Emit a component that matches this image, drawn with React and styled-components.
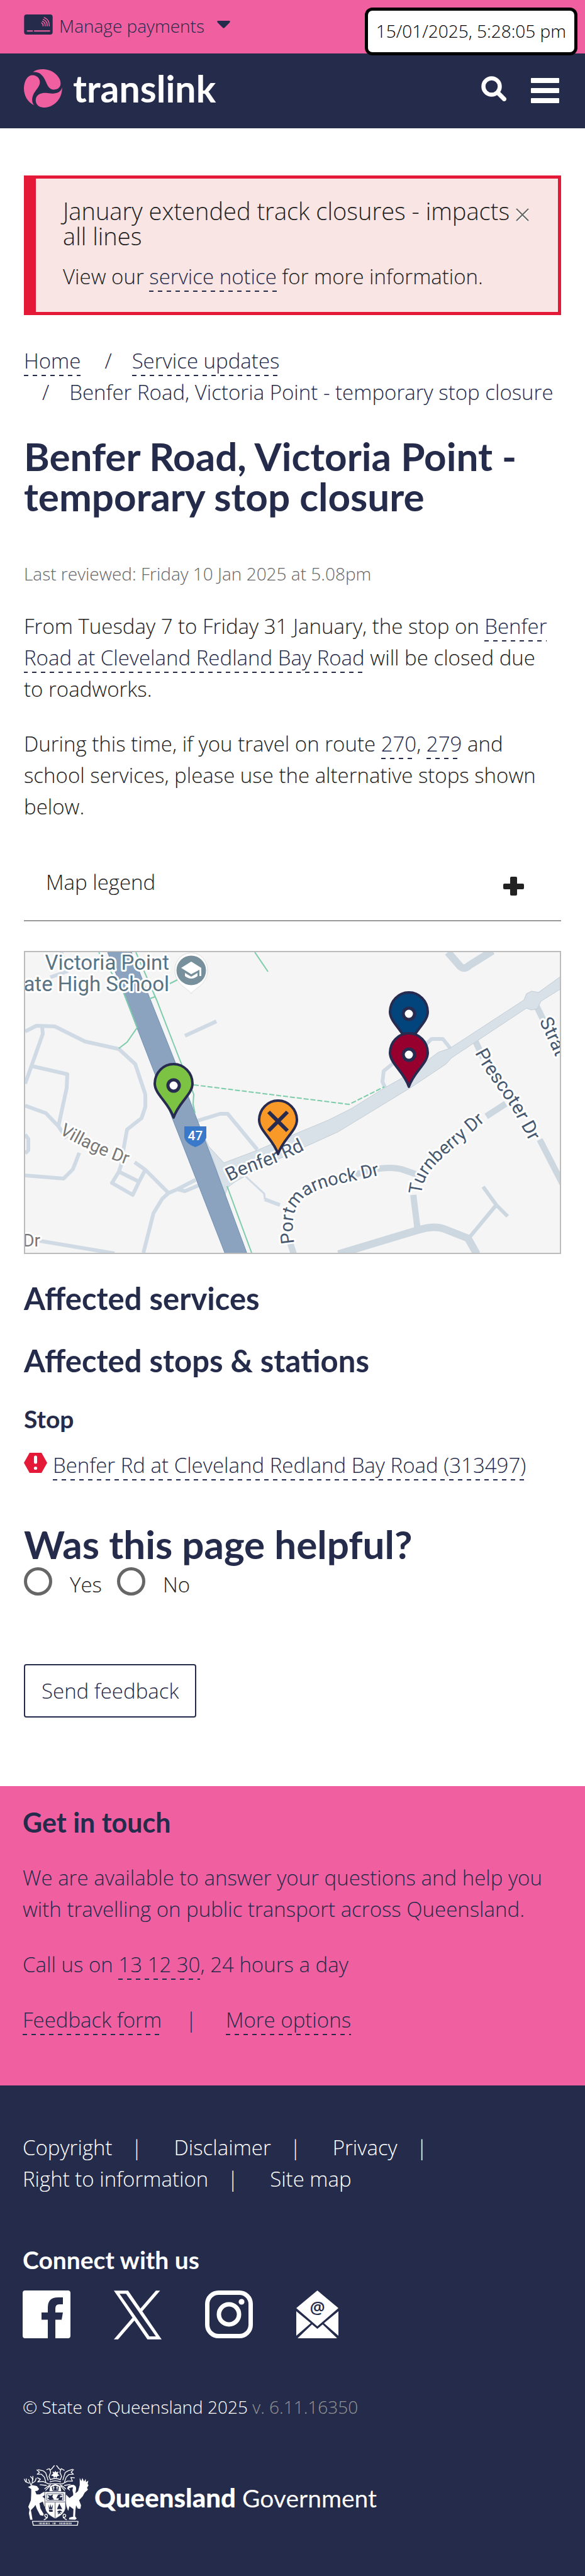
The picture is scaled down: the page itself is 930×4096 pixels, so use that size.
import React from "react";
import styled, { createGlobalStyle } from "styled-components";

const navy = "#252b4b";
const pink = "#f060a1";
const red = "#e41937";
const ink = "#222222";
const bodyFont = `"Open Sans", "Noto Sans", sans-serif`;
const headFont = `Lato, "Open Sans", sans-serif`;

const GlobalStyle = createGlobalStyle`
  *, *::before, *::after { box-sizing: border-box; }
  body {
    margin: 0;
    background: #ffffff;
    color: ${ink};
    font-family: ${bodyFont};
    font-size: 33px;
    font-weight: 300;
    line-height: 50px;
  }
  h1, h2, h3, p, ul, ol { margin: 0; padding: 0; }
  ul, ol { list-style: none; }
  button { font: inherit; color: inherit; background: none; border: 0; padding: 0; margin: 0; cursor: pointer; }
  svg { display: block; flex: none; }
`;

/* ---------- shared parts ---------- */

const Page = styled.div`
  position: relative;
  display: flex;
  flex-direction: column;
`;

const DashedLink = styled.a`
  color: ${navy};
  text-decoration: none;
  padding-bottom: 2px;
  background: repeating-linear-gradient(to right, ${navy} 0 7px, transparent 7px 14px) left bottom / 100% 2px no-repeat;
`;

const Heading = styled.h2`
  color: ${(p) => p.$color || navy};
  font-family: ${headFont};
  font-weight: 700;
  font-size: ${(p) => p.$size}px;
  line-height: ${(p) => p.$line}px;
  margin-top: ${(p) => p.$top || 0}px;
`;

const Paragraph = styled.p`
  margin-top: ${(p) => p.$top}px;
  padding-right: 8px;
`;

/* ---------- header ---------- */

const TopBar = styled.div`
  display: flex;
  height: 85px;
  padding: 23px 38px 0;
  background: ${pink};
`;

const PaymentsButton = styled.button`
  display: flex;
  align-items: flex-start;
  gap: 10px;
  height: 36px;
  color: ${navy};
  font-size: 28px;
  line-height: 36px;
`;

const Caret = styled.svg`
  margin: 10px 0 0 10px;
`;

const Clock = styled.div`
  position: absolute;
  top: 12px;
  right: 12px;
  padding: 13px 13px 15px;
  border: 5px solid #000000;
  border-radius: 12px;
  background: #ffffff;
  color: #000000;
  font-size: 28px;
  line-height: 38px;
`;

const Header = styled.header`
  display: flex;
  align-items: center;
  height: 119px;
  padding: 0 41px 8px 38px;
  background: ${navy};
  color: #ffffff;
`;

const Brand = styled.a`
  display: flex;
  align-items: center;
  gap: 17px;
  margin-right: auto;
  color: #ffffff;
  text-decoration: none;
  font-family: ${headFont};
  font-size: 59px;
  font-weight: 700;
  line-height: 60px;
`;

const IconButton = styled.button`
  margin-left: 39px;
`;

/* ---------- main ---------- */

const Main = styled.main`
  padding: 75px 38px 109px;
`;

const Alert = styled.section`
  display: flex;
  align-items: flex-start;
  padding: 31px 46px 31px 43px;
  border: 5px solid ${red};
  border-left-width: 19px;
  background: #f8e5e4;
`;

const AlertBody = styled.div`
  flex: 1;
`;

const AlertTitle = styled.h2`
  font-size: 38px;
  font-weight: 300;
  line-height: 40px;
`;

const CloseButton = styled.button`
  margin-top: 16px;
`;

const Breadcrumb = styled.ol`
  display: flex;
  flex-wrap: wrap;
  column-gap: 9px;
  margin-top: 48px;
  color: ${navy};
`;

const Crumb = styled.li`
  & + &::before {
    content: "/";
    padding: 0 32px 0 29px;
  }
`;

const Reviewed = styled.p`
  margin-top: 70px;
  color: #666666;
  font-size: 28px;
  line-height: 42px;
`;

const LegendToggle = styled.button`
  display: flex;
  justify-content: space-between;
  width: 100%;
  margin-top: 35px;
  padding: 35px 59px 35px 35px;
  border-bottom: 2px solid #999999;
`;

const PlusIcon = styled.svg`
  margin-top: 16px;
`;

const MapFrame = styled.figure`
  margin: 47px 0 0;
  border: 2px solid #bcbcbc;
  background: #f5f5f5;
  svg { width: 100%; height: auto; }
`;

const StopRow = styled.div`
  display: flex;
  align-items: flex-start;
  gap: 9px;
  margin-top: 24px;
`;

const StopIcon = styled.svg`
  margin-top: 5px;
`;

const Choices = styled.div`
  display: flex;
  gap: 24px;
  margin-top: 5px;
`;

const Choice = styled.label`
  display: flex;
  align-items: flex-start;
  gap: 28px;
  span { padding-top: 3px; }
`;

const Radio = styled.input`
  appearance: none;
  width: 45px;
  height: 45px;
  margin: 0;
  border: 5px solid #666666;
  border-radius: 50%;
  background: #ffffff;
`;

const SendButton = styled.button`
  display: block;
  margin-top: 101px;
  padding: 16px 26px 15px;
  border: 2px solid ${navy};
  border-radius: 4px;
  color: ${navy};
`;

/* ---------- contact and footer ---------- */

const Contact = styled.section`
  padding: 33px 36px 79px;
  background: ${pink};
  color: ${navy};
`;

const LinkList = styled.ul`
  display: flex;
  flex-wrap: wrap;
  column-gap: ${(p) => p.$gap}px;
  margin-top: ${(p) => p.$top || 0}px;
`;

const LinkItem = styled.li`
  &:not(:last-child)::after {
    content: "|";
    padding-left: ${(p) => p.$gap}px;
  }
`;

const Footer = styled.footer`
  padding: 74px 36px 80px;
  background: ${navy};
  color: #ffffff;
`;

const FooterLink = styled.a`
  color: #ffffff;
  text-decoration: none;
`;

const Social = styled.ul`
  display: flex;
  gap: 69px;
  margin-top: 24px;
  height: 76px;
`;

const Copyright = styled.p`
  margin-top: 88px;
  font-size: 28px;
  line-height: 42px;
`;

const Version = styled.span`
  color: #949494;
`;

const GovLogo = styled.a`
  display: flex;
  align-items: center;
  gap: 9px;
  margin: 72px 0 0 2px;
  color: #ffffff;
  text-decoration: none;
  font-family: ${headFont};
  font-size: 39px;
  font-weight: 400;
  strong { font-size: 42px; font-weight: 900; }
  span { padding-top: 6px; }
`;

/* ---------- drawings ---------- */

const CardIcon = () => (
  <svg width="46" height="32" viewBox="60 57 173 122" aria-hidden="true">
    <rect x="60" y="57" width="173" height="122" rx="15" fill={navy} />
    <g fill="none" stroke={pink} strokeWidth="6" strokeLinecap="round">
      <path d="M80 157H110M123 157H214" strokeWidth="8" />
      <path d="M166 108Q177 114 175 126M171 98Q190 106 188 126M176 87Q202 98 200 126M182 76Q215 88 212 126" />
    </g>
  </svg>
);

const TranslinkMark = () => (
  <svg width="61" height="61" viewBox="54 380 232 232" aria-hidden="true" fill={pink}>
    <path d="M108 398C124 385 145 380 172 380C218 382 252 406 270 440C282 468 276 492 252 501C226 509 207 498 196 476C184 448 176 428 158 412C144 400 128 396 108 398Z" />
    <path d="M104 416C138 416 154 442 150 466C145 498 102 522 104 570C105 582 109 590 117 599C78 580 54 542 54 495C56 448 76 418 104 416Z" />
    <path d="M285 491C286 560 236 612 172 612C140 611 122 588 126 560C132 532 158 523 188 524C222 529 272 534 285 491Z" />
  </svg>
);

const Pin = ({ x, y, color, crossed }) => (
  <g transform={`translate(${x} ${y})`}>
    <path d="M0 42C-7 19 -30 5 -30 -12A30 31 0 0 1 30 -12C30 5 7 19 0 42Z" fill={color} stroke="#272b50" strokeWidth="4" strokeLinejoin="round" />
    {crossed ? (
      <path d="M-15 -25L15 5M15 -25L-15 5" stroke="#272b50" strokeWidth="6" />
    ) : (
      <circle cy="-9" r="9" fill="#ffffff" stroke="#272b50" strokeWidth="5" />
    )}
  </g>
);

const StreetMap = () => (
  <svg viewBox="2 2 850 478" role="img" aria-label="Map of Benfer Road stops">
    <defs>
      <path id="village" d="M56 290Q105 321 185 347" />
      <path id="benfer" d="M327 367C350 353 385 345 412 332Q435 323 460 309" />
      <path id="portmarnock" d="M430 465C423 425 430 402 452 388C485 368 530 368 580 352" />
      <path id="turnberry" d="M632 388C634 360 648 345 674 321Q707 293 750 256" />
      <path id="prescoter" d="M717 162C735 200 770 235 785 268Q803 300 820 335" />
      <path id="strat" d="M819 112Q838 148 862 210" />
    </defs>
    <rect x="0" y="0" width="854" height="482" fill="#f5f5f5" />
    <g fill="none" stroke="#cfdae5" strokeWidth="6" strokeLinejoin="round">
      <path d="M2 128L20 119L49 120L97 144L151 156L177 180L193 228V248L187 266L164 284L158 317L155 339L151 351L140 369L173 388L183 367L193 348" />
      <path d="M151 351L183 367M29 121L30 132L12 183L2 211M12 183L69 196L68 218L55 278" />
      <path d="M2 246L35 258L55 279L68 298M176 336L193 348L230 385" />
      <path d="M2 292L7 299V317L2 322M88 321L78 347L63 362L2 357" />
      <path d="M273 364L244 379L230 385L220 394L206 417L190 480M282 371L256 382L244 379" />
      <path d="M25 461L144 481M256 135L306 112M42 42L70 32M60 2V10" />
      <path d="M273 271L312 259H324L371 316M588 178L572 191L570 208L574 217M640 148L648 140L666 140L678 155" />
      <path d="M353 359L382 386L383 395" strokeWidth="3" />
      <path d="M383 395L407 404" />
      <path d="M730 375L751 404L769 422M751 404L707 457" stroke="#ccd7e0" />
    </g>
    <g fill="none" stroke="#ccd7e0" strokeWidth="10" strokeLinejoin="round">
      <path d="M674 2L693 24Q700 31 708 23L745 0" strokeWidth="12" />
      <path d="M814 86L826 110M718 144L730 170M820 300L856 370M766 243L735 263M619 388L626 444" />
      <path d="M520 358Q570 340 600 347L629 357M422 460L429 482" />
      <path d="M500 482L626 444Q652 436 668 442L706 457L720 482" strokeWidth="12" />
    </g>
    <path
      d="M273 268L294 311L318 337L371 317L436 289L484 269L520 251L573 218L614 195L659 161L677 155L795 78L799 68L807 64L818 66L854 40V60L822 80L816 92L807 94L799 91L680 170L671 180L614 218L499 288L448 311L377 344L336 367L324 376L320 387L312 367L303 337Z"
      fill="#d8e0e8"
      stroke="#c3ced6"
      strokeWidth="1"
    />
    <path d="M133 2H171L187 42L241 178L303 341L355 482H320L273 361L208 195Z" fill="#8ba3bf" stroke="#6f90b6" strokeWidth="1" />
    <g fill="none" stroke="#7dccac" strokeWidth="2">
      <path d="M367 2L388 33M178 2L211 78L247 171L270 228L269 244L272 258M119 2L158 65L180 122L164 145L151 155M323 374L362 480M232 52L246 45M200 76L208 73" />
      <path d="M270 213L517 244L573 216" strokeDasharray="8 3" />
    </g>
    <g fontFamily="Roboto, sans-serif" fontWeight="400" fontSize="29" stroke="#ffffff" strokeWidth="6" strokeLinejoin="round" paintOrder="stroke">
      <g fill="#587383" fontSize="33" textAnchor="end">
        <text x="231" y="30">Victoria Point</text>
        <text x="231" y="64">ate High School</text>
      </g>
      <g fill="#777777" fontSize="28">
        <text><textPath href="#village">Village Dr</textPath></text>
        <text x="26" y="470" textAnchor="end">Dr</text>
      </g>
      <g fill="#465870">
        <text fontSize="30"><textPath href="#benfer">Benfer Rd</textPath></text>
        <text><textPath href="#portmarnock">Portmarnock Dr</textPath></text>
        <text><textPath href="#turnberry">Turnberry Dr</textPath></text>
        <text fontSize="30"><textPath href="#prescoter">Prescoter Dr</textPath></text>
        <text fontSize="30"><textPath href="#strat">Strat</textPath></text>
      </g>
    </g>
    <path d="M266 68C262 60 240 54 240 30A26 27 0 0 1 292 30C292 54 270 60 266 68Z" fill="#ffffff" stroke="#dddddd" />
    <circle cx="266" cy="31" r="23.5" fill="#78909c" />
    <path d="M250 27L266 17L282 27V40H279V30L266 37ZM256 35L266 41L276 35V40Q266 48 256 40Z" fill="#ffffff" />
    <path d="M255 279H290V297Q287 307 272.500 312Q258 307 255 297Z" fill="#3a78c9" />
    <text x="272.500" y="301" textAnchor="middle" fill="#ffffff" fontFamily="Roboto, sans-serif" fontSize="21" fontWeight="500">47</text>
    <Pin x={612} y={109} color="#01457c" />
    <Pin x={612} y={174} color="#97002e" />
    <Pin x={238} y={223} color="#7cc243" />
    <Pin x={404} y={281} color="#f99928" crossed />
  </svg>
);

const Crest = () => (
  <svg width="103" height="96" viewBox="54 50 392 366" aria-hidden="true" fill="#ffffff">
    <g fill="none" stroke="#ffffff" strokeWidth="5" strokeLinecap="round" strokeLinejoin="round">
      <path d="M56 134L64 150L84 158M68 132V150M82 136L92 160L100 174M94 118L106 132L104 156L96 172M108 116L108 140M128 128L122 146L108 156" />
      <path d="M132 78L148 92L134 104H160L178 122L186 150M140 76L172 84L186 96L200 140M136 126L154 134L138 150L170 148L206 164M152 168L190 172M192 76L208 70L216 92L206 118L214 138M238 52L222 72L212 80" />
      <path d="M354 76L340 92L354 104L326 106L310 122L300 150M348 74L320 84L304 94L290 138M360 126L338 124L348 146L318 146L284 164M334 166L300 172M298 80L280 70L272 92L282 118L274 138M252 52L266 70L276 78" />
      <path d="M214 136Q244 124 274 136M212 150Q244 138 276 150M208 162H280M180 192Q200 176 216 168M306 192Q290 176 272 168M186 202L210 176M300 202L278 176" />
      <path d="M176 380C196 372 204 352 188 346C174 348 180 366 196 368M312 380C292 372 284 352 298 346C314 348 308 366 292 368" />
      <path d="M105 390H382L378 414H111Z" />
      <path d="M330 200C312 186 320 174 342 174" />
    </g>
    <path d="M218 112L232 100L226 88L240 92L244 82L250 92L264 88L258 102L270 112L256 116L250 128L244 118L236 128L232 116Z" />
    <path d="M78 182L104 170L132 176L146 194L136 204L122 206L130 226L150 226L172 212L184 210V228L166 240L188 258V300L178 300L168 270L148 280L154 312L174 346L170 356L152 352L132 314L124 290L114 304L96 322L106 380H92L84 342L88 318L80 302L96 262L98 220L98 194Z" />
    <path d="M392 126L402 146L408 126L418 148L428 132L430 152L444 142L440 164L446 170L436 186L442 198L422 216L410 238L388 262L400 292L396 314L380 312L370 292L366 320L364 360L374 372L364 380L326 378L330 366L352 362L354 316L330 298L322 326L312 300L306 264L308 226L330 248L352 232C356 216 344 206 350 190C356 180 342 180 316 196C320 174 342 164 358 170C378 180 368 202 366 220L382 206L392 170Z" />
    <path d="M212 178Q244 150 276 178L280 208H208Z" />
    <path d="M222 182Q244 166 266 182L262 204H228Z" fill={navy} />
    <path d="M234 176V200M228 186H240M255 176V200M249 186H261" stroke="#ffffff" strokeWidth="4" />
    <path d="M180 210H306V310C300 344 266 362 244 374C222 362 188 344 182 310Z" stroke={navy} strokeWidth="3" />
    <path d="M192 222H294V262H192ZM185 272H302M243 275V372" fill="none" stroke={navy} strokeWidth="3" />
    <path d="M198 228L214 234L230 226L226 242L236 258L210 260L196 250L206 244ZM250 250L260 230Q278 220 290 236L276 234L270 244L288 242L284 262H262L266 250Z" fill={navy} />
    <path d="M202 286L210 308L214 284L220 308L230 286L226 316H206ZM204 320H228V332H208Z" fill={navy} />
    <path d="M268 282L286 316L254 316ZM254 334Q270 314 288 334" fill={navy} />
    <path d="M258 328L276 344M276 326L260 346" stroke={navy} strokeWidth="5" />
    <path d="M145 402H210M228 402H248M268 402H345" stroke="#ffffff" strokeWidth="10" strokeDasharray="3 5 6 4" />
  </svg>
);

const FacebookIcon = () => (
  <svg width="76" height="76" viewBox="0 0 76 76" fill="#ffffff">
    <path fillRule="evenodd" d="M4 0H72Q76 0 76 4V72Q76 76 72 76H52V46.500H62L64 35H52V29Q52 22 58 22H64V11H56Q40 11 40 27V35H30V46.500H40V76H4Q0 76 0 72V4Q0 0 4 0Z" />
  </svg>
);

const XIcon = () => (
  <svg width="76" height="78" viewBox="0.258 0 23.484 24" fill="#ffffff">
    <path d="M14.234 10.162 22.977 0h-2.072l-7.591 8.824L7.251 0H.258l9.168 13.343L.258 24H2.33l8.016-9.318L16.749 24h6.993zm-2.837 3.299-.929-1.329L3.076 1.560h3.182l5.965 8.532.929 1.329 7.754 11.090h-3.182z" />
  </svg>
);

const InstagramIcon = () => (
  <svg width="76" height="76" viewBox="0 0 76 76" fill="none" stroke="#ffffff" strokeWidth="7">
    <rect x="3.500" y="3.500" width="69" height="69" rx="18" />
    <circle cx="38" cy="38" r="16" />
    <circle cx="58" cy="18" r="4.600" fill="#ffffff" stroke="none" />
  </svg>
);

const MailIcon = () => (
  <svg width="67" height="76" viewBox="0 0 67 76" fill="#ffffff">
    <path d="M33.500 0L67 28L33.500 57L0 28ZM0 33L23 52L0 72ZM67 33L44 52L67 72ZM2 76L25 54L33.500 61L42 54L65 76Z" />
    <text x="33.500" y="37" textAnchor="middle" fontFamily="Open Sans, sans-serif" fontSize="27" fontWeight="600" fill={navy}>@</text>
  </svg>
);

const footerLinks = ["Copyright", "Disclaimer", "Privacy", "Right to information", "Site map"];
const socialLinks = [
  ["Facebook", FacebookIcon],
  ["X", XIcon],
  ["Instagram", InstagramIcon],
  ["Email", MailIcon],
];

export default function App() {
  return (
    <Page>
      <GlobalStyle />
      <TopBar>
        <PaymentsButton type="button">
          <CardIcon />
          Manage payments
          <Caret width="21" height="12" viewBox="0 0 21 12" aria-hidden="true">
            <path d="M2 0H19Q22 0 20 3L12 11Q10.500 12.500 9 11L1 3Q-1 0 2 0Z" fill={navy} />
          </Caret>
        </PaymentsButton>
        <Clock>15/01/2025, 5:28:05 pm</Clock>
      </TopBar>
      <Header>
        <Brand href="#home">
          <TranslinkMark />
          translink
        </Brand>
        <IconButton type="button" aria-label="Search">
          <svg width="40" height="40" viewBox="0 0 40 40" fill="none" stroke="#ffffff">
            <circle cx="16.500" cy="16.500" r="13" strokeWidth="6.500" />
            <path d="M27 27L36.500 36.500" strokeWidth="7" strokeLinecap="round" />
          </svg>
        </IconButton>
        <IconButton type="button" aria-label="Menu">
          <svg width="45" height="46" viewBox="0 0 45 46" fill="#ffffff">
            <rect y="6" width="45" height="8" rx="1" />
            <rect y="22" width="45" height="8" rx="1" />
            <rect y="38" width="45" height="8" rx="1" />
          </svg>
        </IconButton>
      </Header>

      <Main>
        <Alert>
          <AlertBody>
            <AlertTitle>January extended track closures - impacts all lines</AlertTitle>
            <Paragraph $top={20}>
              View our <DashedLink href="#notice">service notice</DashedLink> for more information.
            </Paragraph>
          </AlertBody>
          <CloseButton type="button" aria-label="Close">
            <svg width="21" height="21" viewBox="0 0 21 21" fill="none" strokeWidth="2">
              <path d="M1 3L20 22M20 3L1 22" stroke="#ffffff" />
              <path d="M1 1L20 20M20 1L1 20" stroke="#666666" />
            </svg>
          </CloseButton>
        </Alert>

        <nav aria-label="Breadcrumb">
          <Breadcrumb>
            <Crumb><DashedLink href="#home">Home</DashedLink></Crumb>
            <Crumb><DashedLink href="#updates">Service updates</DashedLink></Crumb>
            <Crumb>Benfer Road, Victoria Point - temporary stop closure</Crumb>
          </Breadcrumb>
        </nav>

        <Heading as="h1" $size={62} $line={64} $top={44}>
          Benfer Road, Victoria Point - temporary stop closure
        </Heading>
        <Reviewed>Last reviewed: Friday 10 Jan 2025 at 5.08pm</Reviewed>

        <Paragraph $top={38}>
          From Tuesday 7 to Friday 31 January, the stop on{" "}
          <DashedLink href="#stop">Benfer Road at Cleveland Redland Bay Road</DashedLink> will be closed due to
          roadworks.
        </Paragraph>
        <Paragraph $top={37}>
          During this time, if you travel on route <DashedLink href="#270">270</DashedLink>,{" "}
          <DashedLink href="#279">279</DashedLink> and school services, please use the alternative stops shown below.
        </Paragraph>

        <LegendToggle type="button" aria-expanded="false">
          Map legend
          <PlusIcon width="33" height="30" viewBox="0 0 33 30" fill={ink} aria-hidden="true">
            <rect x="11" width="11" height="30" rx="2" />
            <rect y="11" width="33" height="9" rx="2" />
          </PlusIcon>
        </LegendToggle>
        <MapFrame>
          <StreetMap />
        </MapFrame>

        <Heading $size={49} $line={60} $top={40}>Affected services</Heading>
        <Heading $size={49} $line={60} $top={39}>Affected stops &amp; stations</Heading>
        <Heading as="h3" $size={39} $line={50} $top={38}>Stop</Heading>
        <StopRow>
          <StopIcon width="37" height="32" viewBox="0 0 37 32" aria-hidden="true">
            <path d="M9 0H28L37 16L28 32H9L0 16Z" fill={red} />
            <path d="M18.500 7V15" stroke="#ffffff" strokeWidth="5" strokeLinecap="round" />
            <circle cx="18.500" cy="24.500" r="2.600" fill="#ffffff" />
          </StopIcon>
          <span>
            <DashedLink href="#313497">Benfer Rd at Cleveland Redland Bay Road (313497)</DashedLink>
          </span>
        </StopRow>

        <form onSubmit={(e) => e.preventDefault()}>
          <Heading $size={62} $line={64} $top={68}>Was this page helpful?</Heading>
          <Choices>
            <Choice><Radio type="radio" name="helpful" value="yes" /><span>Yes</span></Choice>
            <Choice><Radio type="radio" name="helpful" value="no" /><span>No</span></Choice>
          </Choices>
          <SendButton type="submit">Send feedback</SendButton>
        </form>
      </Main>

      <Contact>
        <Heading $size={43} $line={50}>Get in touch</Heading>
        <Paragraph $top={38}>
          We are available to answer your questions and help you with travelling on public transport across
          Queensland.
        </Paragraph>
        <Paragraph $top={38}>
          Call us on <DashedLink href="tel:131230">13 12 30</DashedLink>, 24 hours a day
        </Paragraph>
        <LinkList $gap={46} $top={38}>
          <LinkItem $gap={38}><DashedLink href="#feedback">Feedback form</DashedLink></LinkItem>
          <LinkItem $gap={38}><DashedLink href="#options">More options</DashedLink></LinkItem>
        </LinkList>
      </Contact>

      <Footer>
        <LinkList $gap={50}>
          {footerLinks.map((label) => (
            <LinkItem key={label} $gap={30}>
              <FooterLink href="#footer">{label}</FooterLink>
            </LinkItem>
          ))}
        </LinkList>
        <Heading as="h3" $size={39} $line={50} $top={78} $color="#ffffff">Connect with us</Heading>
        <Social>
          {socialLinks.map(([name, Icon]) => (
            <li key={name}>
              <FooterLink href={`#${name}`} aria-label={name}><Icon /></FooterLink>
            </li>
          ))}
        </Social>
        <Copyright>
          © State of Queensland 2025 <Version>v. 6.11.16350</Version>
        </Copyright>
        <GovLogo href="#qld">
          <Crest />
          <span><strong>Queensland</strong> Government</span>
        </GovLogo>
      </Footer>
    </Page>
  );
}
